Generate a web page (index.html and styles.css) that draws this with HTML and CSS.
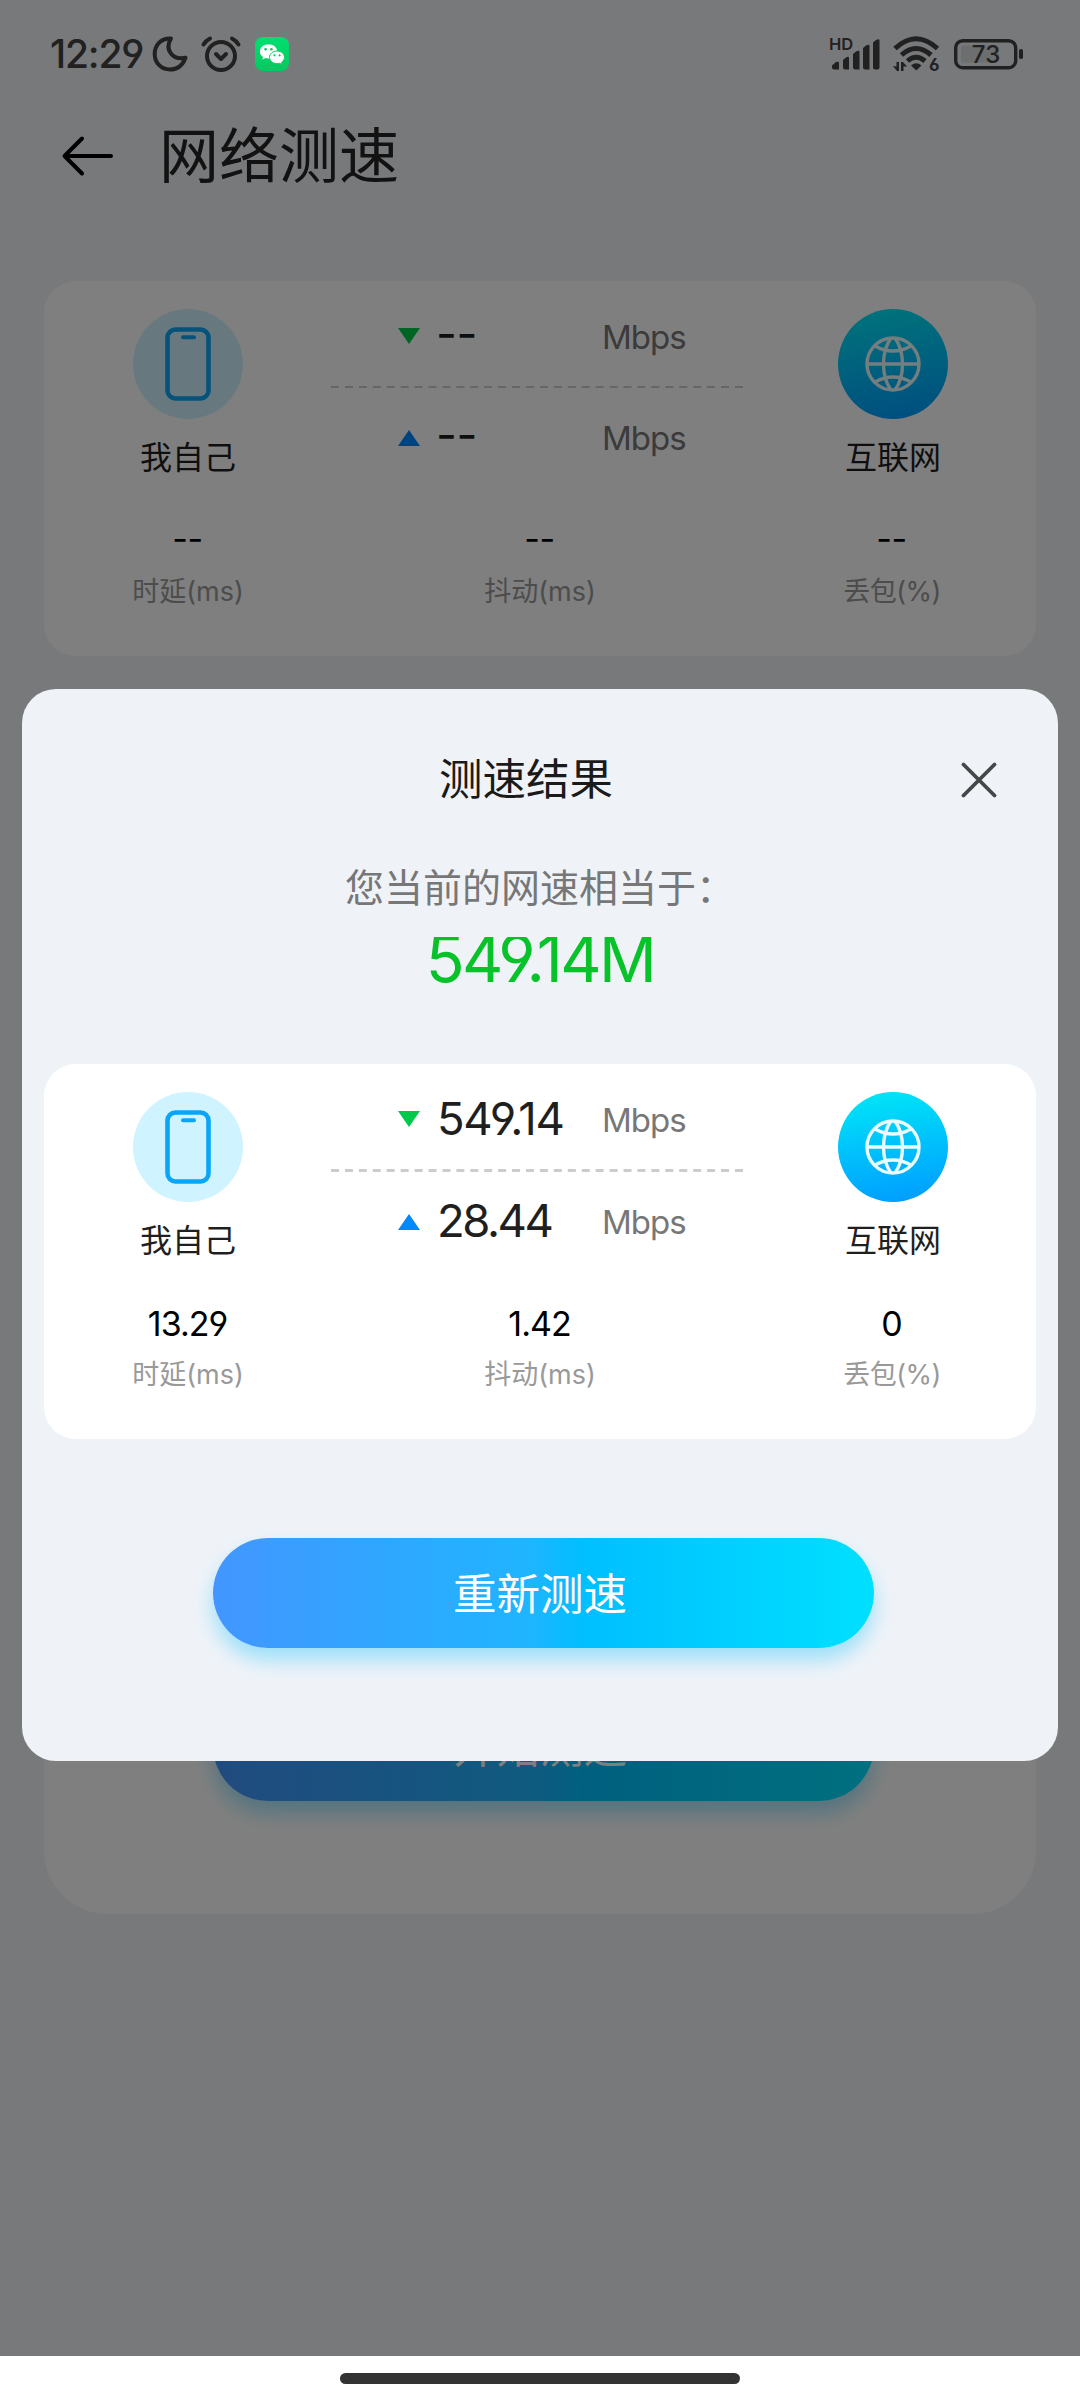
FILE: index.html
```html
<!DOCTYPE html>
<html lang="zh-CN">
<head>
<meta charset="utf-8">
<title>网络测速</title>
<link rel="stylesheet" href="styles.css">
</head>
<body>
<svg class="defs" width="0" height="0" aria-hidden="true">
  <defs>
    <linearGradient id="globe-fill" x1=".42" y1="0" x2=".58" y2="1">
      <stop offset="0" stop-color="#00e4f8"/><stop offset="1" stop-color="#009eff"/>
    </linearGradient>
    <symbol id="phone" viewBox="0 0 110 110">
      <circle cx="55" cy="55" r="55" fill="#cff3ff"/>
      <rect x="34.5" y="20.500" width="41" height="69" rx="8" fill="none" stroke="#0aa5f7" stroke-width="4.600"/>
      <path d="M50 28.300h11" stroke="#0aa5f7" stroke-width="4" stroke-linecap="round"/>
    </symbol>
    <symbol id="globe" viewBox="0 0 110 110">
      <circle cx="55" cy="55" r="55" fill="url(#globe-fill)"/>
      <g fill="none" stroke="#e9fcff" stroke-width="3.400">
        <circle cx="55" cy="55" r="26"/>
        <path d="M29 55h52"/>
        <path d="M53 29C43 43 43 67 53 81M57 29C67 43 67 67 57 81"/>
        <path d="M37 37Q55 47 73 37M37 73Q55 63 73 73"/>
      </g>
    </symbol>
  </defs>
</svg>
<div class="screen">
  <div class="page">
    <header class="titlebar">
      <svg class="back" width="54" height="42" viewBox="0 0 54 42"><path d="M50 21H4M21 3.500L3.500 21 21 38.500" fill="none" stroke="#000" stroke-width="4" stroke-linecap="round" stroke-linejoin="round"/></svg>
      <h1>网络测速</h1>
    </header>
    <section class="card idle">
      <div class="top">
        <div class="node"><svg width="110" height="110"><use href="#phone"/></svg><span>我自己</span></div>
        <div class="rates">
          <div class="rate"><i class="down"></i><b>--</b><em>Mbps</em></div>
          <svg class="dash" width="412" height="2"><path d="M0 1H412" stroke="#ccc" stroke-width="2" stroke-dasharray="8 5.930"/></svg>
          <div class="rate"><i class="up"></i><b>--</b><em>Mbps</em></div>
        </div>
        <div class="node"><svg width="110" height="110"><use href="#globe"/></svg><span>互联网</span></div>
      </div>
      <div class="stats">
        <div><b>--</b><span>时延(ms)</span></div>
        <div><b>--</b><span>抖动(ms)</span></div>
        <div><b>--</b><span>丢包(%)</span></div>
      </div>
    </section>
    <section class="panel"><button class="btn">开始测速</button></section>
  </div>
  <div class="mask"></div>
  <div class="statusbar">
    <span class="time">12:29</span>
    <svg class="moon" width="36" height="36" viewBox="0 0 36 36"><path d="M19 2.500C8.500 2 2.700 9.500 2.700 18.200 2.700 27 9.500 33.500 18 33.500c7 0 12.700-4.200 15.500-11.800C21 24.500 12 14 19 2.500Z" fill="none" stroke="#212121" stroke-width="4" stroke-linejoin="round"/></svg>
    <svg class="alarm" width="40" height="36" viewBox="0 0 40 36"><g fill="none" stroke="#212121" stroke-width="4" stroke-linecap="round" stroke-linejoin="round"><circle cx="20" cy="20" r="14"/><path d="M15 18l5 5 5-5M2.500 8.500Q5 4.500 9 2.500M37.500 8.500Q35 4.500 31 2.500"/></g></svg>
    <svg class="wechat" width="34" height="34" viewBox="0 0 34 34"><defs><linearGradient id="wg" x2="0" y2="1"><stop stop-color="#00e070"/><stop offset="1" stop-color="#07c75f"/></linearGradient></defs><rect width="34" height="34" rx="8" fill="url(#wg)"/><path d="M13.500 7.300c-4.800 0-8.600 3.200-8.600 7.100 0 2.300 1.200 4.200 3.200 5.500l-.8 2.900 3.200-1.700c1 .3 2 .4 3 .4 4.900 0 8.700-3.200 8.700-7.100s-3.800-7.100-8.700-7.100Z" fill="#fff"/><path d="M22 14c-4.200 0-7.500 2.800-7.500 6.300s3.300 6.300 7.500 6.300c.9 0 1.800-.1 2.600-.4l2.600 1.400-.6-2.400c1.800-1.200 2.900-2.900 2.900-4.900 0-3.500-3.300-6.300-7.500-6.300Z" fill="#fff" stroke="#04d066"/><g fill="#07c75f"><circle cx="10.600" cy="12.200" r="1.300"/><circle cx="16.400" cy="12.200" r="1.300"/><circle cx="19.500" cy="18.300" r="1.100"/><circle cx="24.600" cy="18.300" r="1.100"/></g></svg>
    <svg class="signal" width="50" height="34" viewBox="0 0 50 34"><text x="-1" y="12.500" class="hd">HD</text><g fill="#212121"><path d="M2 28.500l4-3.500q3-1 3 1V32.500H4q-2 0-2-2ZM13 23l3-2.500q3-1.500 3 .5V32.500H15q-2 0-2-2ZM23 17l3-2.500q3.500-1.500 3.500.5V32.500H25q-2 0-2-2ZM33 11l3-2.500q3.500-1.500 3.500.5V32.500H35q-2 0-2-2ZM43 5.500l3-2.500q3.500-1.500 3.500.5V30.500q0 2-2 2H45q-2 0-2-2Z"/></g></svg>
    <svg class="wifi" width="48" height="38" viewBox="0 0 48 38"><g fill="none" stroke="#212121" stroke-width="5"><path d="M2 13.500Q23 -6 44.500 13.500M8.500 20Q23 7 38 20M14.500 26Q23 18.500 32 26"/></g><path d="M18 30.500q5.300-4.500 10.500 0L23.300 35.500ZM0 31l3.500.5V27H6V36H4ZM8 36V27h2l4 4.500H10.500V36Z" fill="#212121"/><text x="36" y="36" class="six">6</text></svg>
    <svg class="battery" width="70" height="32" viewBox="0 0 70 32"><rect x="1.700" y="2.700" width="60" height="27" rx="7" fill="none" stroke="#212121" stroke-width="3.400"/><rect x="7" y="7.500" width="38" height="17" rx="3" fill="#6d6e70"/><rect x="65" y="11" width="4" height="10" rx="1.800" fill="#212121"/><text x="32" y="24.500" class="pct">73</text></svg>
  </div>
  <div class="dialog">
    <div class="dialog-head"><h2>测速结果</h2>
      <svg class="close" width="36" height="36" viewBox="0 0 36 36"><path d="M2.500 2.500l31 31M33.500 2.500l-31 31" stroke="#454648" stroke-width="3.800" stroke-linecap="round"/></svg>
    </div>
    <p class="hint">您当前的网速相当于：</p>
    <p class="speed"><span>549.14M</span></p>
    <section class="card result">
      <div class="top">
        <div class="node"><svg width="110" height="110"><use href="#phone"/></svg><span>我自己</span></div>
        <div class="rates">
          <div class="rate"><i class="down"></i><b class="wide">549.14</b><em>Mbps</em></div>
          <svg class="dash" width="412" height="3"><path d="M0 1.500H412" stroke="#ccc" stroke-width="3" stroke-dasharray="8 5.930"/></svg>
          <div class="rate"><i class="up"></i><b>28.44</b><em>Mbps</em></div>
        </div>
        <div class="node"><svg width="110" height="110"><use href="#globe"/></svg><span>互联网</span></div>
      </div>
      <div class="stats">
        <div><b>13.29</b><span>时延(ms)</span></div>
        <div><b>1.42</b><span>抖动(ms)</span></div>
        <div><b>0</b><span>丢包(%)</span></div>
      </div>
    </section>
    <button class="btn">重新测速</button>
  </div>
  <div class="navbar"><div class="pill"></div></div>
</div>
</body>
</html>
```
FILE: styles.css
```css
* { box-sizing: border-box; margin: 0; padding: 0; }
body {
  font-family: Inter, "Noto Sans CJK SC", sans-serif;
  font-feature-settings: "cv04", "cv03";
  color: #1f1f1f;
}
h1, h2, b, em, i { font-weight: 400; font-style: normal; }
svg { display: block; flex: none; overflow: visible; }
.defs { position: absolute; }
.screen { position: relative; width: 1080px; height: 2400px; overflow: hidden; background: #f0f2f7; }
.page { padding: 121px 44px 0; }
.titlebar { display: flex; align-items: center; height: 70px; padding-left: 17px; }
.titlebar h1 { margin-left: 44px; font-size: 60px; line-height: 70px; color: #242424; }
.card { width: 992px; height: 375px; border-radius: 32px; background: #fff; }
.idle { margin-top: 90px; }
.top, .stats { display: grid; grid-template-columns: 288px 416px 288px; }
.top { height: 240px; }
.node { display: flex; flex-direction: column; align-items: center; padding-top: 28px; }
.node + .rates + .node { padding-left: 2px; }
.node span { margin-top: 19px; font-size: 32px; line-height: 40px; }
.rates { padding-top: 25px; }
.rate { display: flex; align-items: center; height: 60px; padding-left: 66px; }
.dash { margin: 20px 0 19px -1px; }
.down, .up { width: 22px; height: 16px; background: #00c84b; clip-path: polygon(0 0, 100% 0, 50% 100%); }
.up { margin-top: 2px; background: #0088ff; clip-path: polygon(50% 0, 100% 100%, 0 100%); }
.rate b { width: 165px; margin-left: 17px; font-size: 45.500px; line-height: 60px; letter-spacing: -2.500px; }
.rate .wide { letter-spacing: -1.300px; }
.idle .rate b { margin-left: 16px; width: 166px; padding-bottom: 5px; letter-spacing: -.5px; }
.rate em { padding-top: 2px; font-size: 33px; letter-spacing: -1px; color: #777; }
.stats div { display: flex; flex-direction: column; align-items: center; }
.stats b { padding-right: 1px; font-size: 34px; line-height: 40px; letter-spacing: -1px; color: #000; }
.idle .stats b { height: 40px; line-height: 35px; letter-spacing: -.5px; }
.stats span { margin-top: 13px; font-size: 27px; line-height: 36px; color: #999; }
.stats div:last-child span { letter-spacing: -.5px; }
.panel { display: flex; justify-content: center; align-items: flex-end; height: 1225px; margin-top: 33px; padding: 0 0 113px 7px; border-radius: 64px; background: #fff; }
.btn {
  width: 661px; height: 110px; border: 0; border-radius: 55px;
  background: linear-gradient(90deg, #4396ff, #1fb5ff 48%, #00bfff 56%, #00e0ff);
  box-shadow: 0 12px 20px rgba(0, 190, 255, .35);
  color: #fff; font-family: inherit; font-size: 43.500px; line-height: 112px; padding: 0 7px 0 0;
}
.mask { position: absolute; inset: 0; background: rgba(0, 0, 0, .5); }
.statusbar { position: absolute; top: 34px; left: 50px; right: 0; height: 40px; display: flex; align-items: center; color: #212121; }
.time { width: 102px; font-size: 39px; line-height: 40px; letter-spacing: -1.200px; font-weight: 450; white-space: nowrap; }
.alarm { margin-left: 13px; }
.wechat { margin-left: 14px; }
.signal { margin-left: 541px; }
.wifi { margin-left: 13px; }
.battery { margin-left: 13px; }
.hd { font-size: 16.500px; font-weight: 600; fill: #212121; }
.six { font-size: 17px; font-weight: 700; fill: #212121; }
.pct { font-size: 24px; font-weight: 450; text-anchor: middle; fill: #212121; }
.dialog { position: absolute; top: 689px; left: 22px; width: 1036px; height: 1072px; border-radius: 34px; background: #eff3f8; display: flex; flex-direction: column; align-items: center; }
.dialog-head { position: relative; width: 100%; height: 60px; margin-top: 60px; text-align: center; }
.dialog-head h2 { padding-right: 28px; font-size: 43.500px; line-height: 60px; color: #1a1a1a; }
.close { position: absolute; right: 61px; top: 13px; }
.hint { margin-top: 49px; font-size: 39px; line-height: 60px; color: #777; }
.speed { height: 50px; margin-top: 19px; overflow: hidden; color: #07c228; font-size: 64px; line-height: 44px; letter-spacing: -2.600px; }
.result { margin-top: 77px; }
.dialog .btn { margin: 99px 0 0 7px; }
.navbar { position: absolute; left: 0; bottom: 0; width: 100%; height: 44px; display: flex; justify-content: center; padding-top: 17px; background: #fff; }
.pill { width: 400px; height: 11px; border-radius: 6px; background: #333; }
```
